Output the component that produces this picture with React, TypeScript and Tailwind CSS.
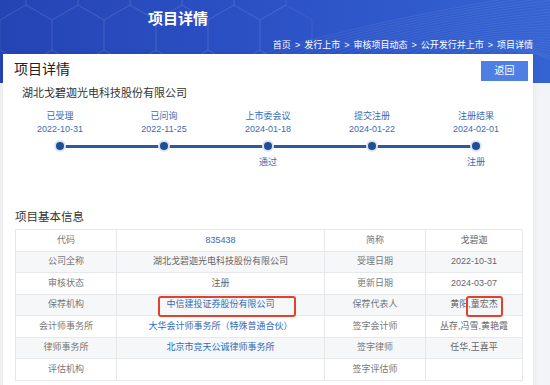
import React from "react";

const steps = [
  { label: "已受理", date: "2022-10-31", note: "" },
  { label: "已问询", date: "2022-11-25", note: "" },
  { label: "上市委会议", date: "2024-01-18", note: "通过" },
  { label: "提交注册", date: "2024-01-22", note: "" },
  { label: "注册结果", date: "2024-02-01", note: "注册" },
];

type Cell = { text: string; link?: boolean };
const rows: [string, Cell, string, Cell][] = [
  ["代码", { text: "835438", link: true }, "简称", { text: "戈碧迦" }],
  ["公司全称", { text: "湖北戈碧迦光电科技股份有限公司" }, "受理日期", { text: "2022-10-31" }],
  ["审核状态", { text: "注册" }, "更新日期", { text: "2024-03-07" }],
  ["保荐机构", { text: "中信建投证券股份有限公司", link: true }, "保荐代表人", { text: "黄阳,童宏杰" }],
  ["会计师事务所", { text: "大华会计师事务所（特殊普通合伙）", link: true }, "签字会计师", { text: "丛存,冯雪,黄艳霞" }],
  ["律师事务所", { text: "北京市竞天公诚律师事务所", link: true }, "签字律师", { text: "任华,王喜平" }],
  ["评估机构", { text: "" }, "签字评估师", { text: "" }],
];

function HeaderPattern() {
  const hex = (cx: number, cy: number, r: number) => {
    const pts = [0, 1, 2, 3, 4, 5]
      .map((i) => {
        const a = (Math.PI / 3) * i + Math.PI / 6;
        return `${cx + r * Math.cos(a)},${cy + r * Math.sin(a)}`;
      })
      .join(" ");
    return <polygon key={`${cx}-${cy}`} points={pts} />;
  };
  const hexes = [];
  for (let row = 0; row < 3; row++) {
    for (let col = 0; col < 6; col++) {
      hexes.push(hex(col * 52 + (row % 2) * 26, row * 45 - 10, 30));
    }
  }
  const lines = [];
  for (let i = 0; i < 26; i++) {
    lines.push(
      <path
        key={i}
        d={`M${160 + i * 14} 90 Q ${300 + i * 8} 30 ${560} ${-10 + i * 3}`}
      />
    );
  }
  return (
    <svg className="absolute inset-0" width="550" height="83" viewBox="0 0 550 83">
      <g fill="none" stroke="#ffffff" strokeOpacity="0.07" strokeWidth="1">
        {hexes}
      </g>
      <g fill="none" stroke="#ffffff" strokeOpacity="0.09" strokeWidth="0.8">
        {lines}
      </g>
    </svg>
  );
}

export default function App() {
  return (
    <div className="w-[550px] h-[385px] overflow-hidden bg-[#f3f4f7] font-['Liberation_Sans','Noto_Sans_CJK_SC',sans-serif]">
      <header className="relative h-[83px] bg-gradient-to-r from-[#2544b4] via-[#2c52c6] to-[#3563d2]">
        <HeaderPattern />
        <div className="relative pt-[9px] pl-[148px]">
          <h1 className="text-[15px] leading-[20px] font-bold text-white">项目详情</h1>
        </div>
        <nav className="relative mt-[10px] flex justify-end gap-[4px] pr-[17px] text-[9px] leading-[12px] text-white">
          <span>首页</span>
          <span>&gt;</span>
          <span>发行上市</span>
          <span>&gt;</span>
          <span>审核项目动态</span>
          <span>&gt;</span>
          <span>公开发行并上市</span>
          <span>&gt;</span>
          <span>项目详情</span>
        </nav>
      </header>

      <main className="relative -mt-[29px] ml-[3px] w-[530px] h-[340px] bg-white shadow-[0_0_6px_rgba(0,0,0,0.08)]">
        <div className="flex items-start justify-between pl-[11px] pr-[5px] pt-[7px]">
          <h2 className="mt-[-1px] text-[14px] leading-[18px] text-[#222]">项目详情</h2>
          <button className="w-[47px] h-[20px] bg-[#4f7fe2] text-white text-[10px] leading-[20px]">
            返回
          </button>
        </div>

        <p className="mt-[5px] pl-[19px] text-[11px] leading-[14px] text-[#333]">
          湖北戈碧迦光电科技股份有限公司
        </p>

        <div className="relative mt-[10px] ml-[5px] grid grid-cols-[repeat(5,104px)]">
          <div className="absolute left-[52px] right-[52px] top-[34.5px] h-[3px] bg-[#2c5aa2]" />
          {steps.map((s) => (
            <div key={s.label} className="relative flex flex-col items-center text-[9px] text-[#3b6cb6]">
              <span className="leading-[12px]">{s.label}</span>
              <span className="mt-[1px] leading-[12px]">{s.date}</span>
              <div className="h-[22px] flex items-center justify-center">
                <span className="w-[12px] h-[12px] rounded-full bg-[#dfe5ee] flex items-center justify-center">
                  <span className="w-[8px] h-[8px] rounded-full bg-[#1f4e98]" />
                </span>
              </div>
              <span className="leading-[11px]">{s.note}</span>
            </div>
          ))}
        </div>

        <h3 className="mt-[42px] pl-[12px] text-[11.5px] leading-[14px] text-[#333]">项目基本信息</h3>

        <div className="relative mt-[5px] ml-[12px] w-[507px] border-t border-l border-[#e6e8eb] text-[9px]">
          {rows.map((r, i) => (
            <div
              key={r[0]}
              className={`grid grid-cols-[101px_208px_101px_97px] h-[21.5px] ${i % 2 === 1 ? "bg-[#f6f7f9]" : "bg-white"}`}
            >
              {[r[0], r[1], r[2], r[3]].map((c, j) => {
                const cell = typeof c === "string" ? { text: c } : c;
                const color = cell.link ? "text-[#2f6cb8]" : j % 2 === 0 ? "text-[#777]" : "text-[#666]";
                return (
                  <div
                    key={j}
                    className={`flex items-center justify-center border-r border-b border-[#e6e8eb] whitespace-nowrap ${color}`}
                  >
                    {cell.text}
                  </div>
                );
              })}
            </div>
          ))}
          <div className="absolute left-[142px] top-[66px] w-[138px] h-[21px] rounded-[3px] border-2 border-[#e2412c]" />
          <div className="absolute left-[450px] top-[66px] w-[37px] h-[21px] rounded-[3px] border-2 border-[#e2412c]" />
        </div>
      </main>
    </div>
  );
}
